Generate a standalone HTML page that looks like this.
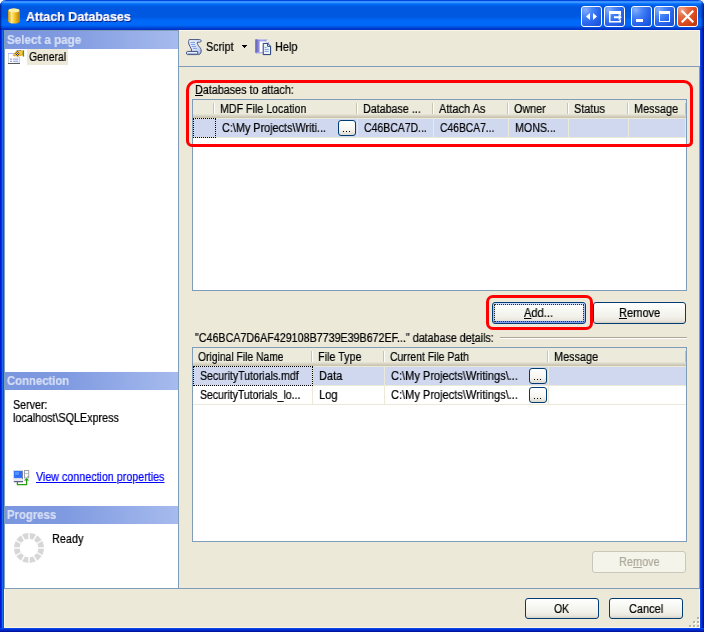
<!DOCTYPE html>
<html><head><meta charset="utf-8">
<style>
*{box-sizing:border-box;margin:0;padding:0}
html,body{width:704px;height:632px;overflow:hidden;background:#fff}
body{position:relative;font-family:"Liberation Sans",sans-serif;font-size:12.5px;color:#000}
.a{position:absolute}
.t{position:absolute;white-space:nowrap;line-height:16px;transform-origin:0 0;will-change:transform;-webkit-text-stroke:0.22px currentColor}
u{text-decoration:underline}
#frame{position:absolute;left:0;top:0;width:704px;height:632px;border-radius:6px 6px 0 0;overflow:hidden;
 background:linear-gradient(to right,#0019cf 0,#0019cf 1px,#0831d9 1px,#0831d9 2px,#166aee 2px,#166aee 3px,#0855dd 3px,#0855dd 4px,#ece9d8 4px,#ece9d8 700px,#0a46e6 700px,#0a46e6 701px,#0032d7 701px,#0032d7 702px,#001ebe 702px,#001ebe 703px,#001496 703px)}
#bot{position:absolute;left:0;top:628px;width:704px;height:4px;background:linear-gradient(to bottom,#0a46e6 0,#0a46e6 1px,#0032d7 1px,#0032d7 2px,#0023c3 2px,#0023c3 3px,#0014a0 3px)}
#title{position:absolute;left:0;top:0;width:704px;height:30px;
background:linear-gradient(to bottom,#0046e1 0.5px,#3a8fff 1.5px,#3c96ff 2.5px,#0c78ff 3.5px,#0069f5 4.5px,#005fe8 5.5px,#005ae1 6.5px,#0058e0 7.5px,#0058e0 8.5px,#0058e0 9.5px,#0058e0 10.5px,#0058e0 11.5px,#0058e0 12.5px,#0058e0 13.5px,#0058e0 14.5px,#0058e0 15.5px,#0058e0 16.5px,#005ce6 17.5px,#0060ec 18.5px,#0064f3 19.5px,#0069fa 20.5px,#0069fa 21.5px,#0069fa 22.5px,#0069fa 23.5px,#0069fa 24.5px,#0064f5 25.5px,#005ae8 26.5px,#004bda 27.5px,#003cd0 28.5px,#0032c8 29.5px)}
.tb{position:absolute;top:6px;width:21px;height:21px;border:1px solid #fff;border-radius:3px;
background:radial-gradient(ellipse at 20% 15%,#88aefa 0%,#4986f6 28%,#2b68ee 58%,#1c56de 85%,#164cd0 100%)}
.tb.close{background:radial-gradient(ellipse at 20% 15%,#f2a88c 0%,#e66c46 28%,#dc4e22 58%,#c63c10 85%,#b8340a 100%)}
/* left panel */
#left{position:absolute;left:4px;top:30px;width:175px;height:559px;background:#fff;border:1px solid #7f9db9}
.hdr{position:absolute;left:5px;width:173px;height:18px;background:linear-gradient(to right,#7a96df 0%,#7f9ae0 35%,#a6bbee 100%)}
/* grids */
.grid{position:absolute;background:#fff;border:1px solid #7f9db9;overflow:hidden}
.gh{position:absolute;left:0;top:0;right:0;height:18px;background:linear-gradient(to bottom,#ebeadb 0,#ebeadb 14px,#e5e2d3 14px,#e5e2d3 15px,#dbd8c7 15px,#dbd8c7 16px,#d1cdbc 16px,#d1cdbc 17px,#c9c5b3 17px)}
.sep{position:absolute;top:3px;width:2px;height:11px;border-left:1px solid #c7c5b2;border-right:1px solid #fff}
.row{position:absolute;left:0;right:0}
.sel{background:#d0d8f0}
.cl{position:absolute;top:0;width:1px;bottom:0;background:#ece9d8}
.foc{position:absolute;border:1px dotted #000}
.btn{position:absolute;border:1px solid #003c74;border-radius:3px;background:linear-gradient(to bottom,#fff 0%,#f9f9f5 30%,#f2f1ea 68%,#e8e6dc 88%,#d6d0c5 100%)}
.btn.def{box-shadow:inset 0 2px 0 0 #cedcfc, inset 0 -2px 0 0 #7f9fe8, inset 2px 0 0 0 #a9c2f3, inset -2px 0 0 0 #a9c2f3}
.btn.dis{border-color:#c9c7ba;background:#f5f4ea}
.ell{position:absolute;width:18px;border:1px solid #003c74;border-radius:3px;background:linear-gradient(to bottom,#fff 0%,#f6f5f0 60%,#dedbd0 100%)}
.ell i{position:absolute;bottom:3px;width:1px;height:1px;background:#000}
.red{position:absolute;border:3px solid #fe0000;border-radius:10px}
</style></head><body>
<div class="a" style="left:694px;top:0;width:10px;height:10px;background:#f4efd8"></div>
<div id="frame"></div>
<div class="a" style="left:0;top:0;width:704px;height:30px;overflow:hidden"><div id="title" style="border-radius:6px 6px 0 0"></div><div class="a" style="left:0;top:0;width:704px;height:30px;border-radius:6px 6px 0 0;background:linear-gradient(to right,rgba(0,0,110,.55) 0,rgba(0,0,110,.55) 1px,rgba(0,0,110,.22) 1px,rgba(0,0,110,.22) 2px,rgba(0,0,110,0) 2px,rgba(0,0,110,0) 701px,rgba(0,0,110,.2) 701px,rgba(0,0,110,.2) 702px,rgba(0,0,110,.42) 702px,rgba(0,0,110,.42) 703px,rgba(0,0,110,.62) 703px)"></div></div>
<div id="bot"></div>

<!-- title icon -->
<svg class="a" style="left:7px;top:7px" width="14" height="18" viewBox="0 0 14 18">
 <defs><linearGradient id="cy" x1="0" x2="1"><stop offset="0" stop-color="#c89412"/><stop offset=".3" stop-color="#ffe98a"/><stop offset=".55" stop-color="#f6c62a"/><stop offset="1" stop-color="#b47a08"/></linearGradient></defs>
 <path d="M1 4 C1 0.6 13 0.6 13 4 L13 14 C13 17.4 1 17.4 1 14 Z" fill="url(#cy)"/>
 <ellipse cx="7" cy="3.4" rx="5.4" ry="1.9" fill="#fdf0a8"/>
</svg>

<!-- caption buttons -->
<div class="tb" style="left:581px"></div>
<div class="tb" style="left:604px"></div>
<div class="tb" style="left:631px"></div>
<div class="tb" style="left:654px"></div>
<div class="tb close" style="left:677px"></div>
<svg class="a" style="left:581px;top:6px" width="117" height="21" viewBox="0 0 117 21" fill="#fff">
 <path d="M9 7 L9 14 L5 10.5 Z"/><path d="M12 7 L12 14 L16 10.5 Z"/>
 <path d="M28 5h12v4.6h-1.5v-1.6h-9v7h9v-1.4h1.5v2.9h-12z"/>
 <path d="M33 10.2h4.6v-2.2l3.2 3.2-3.2 3.2v-2.2h-4.6z"/>
 <rect x="55" y="13" width="7" height="3"/>
 <path d="M78 5h11v11h-11z M79 8v7h9v-7z" fill-rule="evenodd"/>
 <path d="M101.5 5.5 L111.5 15.5 M111.5 5.5 L101.5 15.5" stroke="#fff" stroke-width="2.2" stroke-linecap="square" fill="none"/>
</svg>

<!-- left panel -->
<div id="left"></div>
<div class="hdr" style="top:31px"></div>
<div class="a" style="left:27px;top:49px;width:41px;height:16px;background:#ece9d8"></div>
<div class="hdr" style="top:372px"></div>
<div class="hdr" style="top:506px"></div>
<!-- General icon: 8..24 x 50..64 -->
<svg class="a" style="left:8px;top:50px" width="17" height="14" viewBox="0 0 17 14">
 <defs><pattern id="chk" width="2" height="2" patternUnits="userSpaceOnUse"><rect width="2" height="2" fill="#f0d020"/><rect width="1" height="1" fill="#383868"/><rect x="1" y="1" width="1" height="1" fill="#383868"/></pattern>
 <linearGradient id="pg" x1="0" y1="0" x2="1" y2="1"><stop offset=".5" stop-color="#fff"/><stop offset="1" stop-color="#cfe4ff"/></linearGradient></defs>
 <rect x="0" y="3" width="12" height="11" fill="url(#pg)"/>
 <rect x="0" y="3" width="12" height="1" fill="#b4b4ff"/>
 <rect x="0" y="4" width="1" height="9" fill="#d4d4dc"/>
 <rect x="11" y="7" width="1" height="6" fill="#c4d0ff"/>
 <rect x="0" y="13" width="12" height="1" fill="#585858"/>
 <rect x="2" y="8.6" width="2" height="1" fill="#8484c8"/><rect x="5" y="8.6" width="5" height="1" fill="#9c9cd8"/>
 <rect x="2" y="10.8" width="2" height="1" fill="#8484c8"/><rect x="5" y="10.8" width="5" height="1" fill="#9c9cd8"/>
 <path d="M4.6 5.6 L8 1 L11.6 0.3 L15 0.6 L15 5.6 L12.4 6 L11 6 L9.6 7.6 L8.4 6 L6.4 6.4 Z" fill="#f2ae2e"/>
 <path d="M5 5.4 L8.2 1.2 L9.6 1.4 L6.6 5.8 Z" fill="#d8b45c"/>
 <path d="M10.4 1.2 L13.6 0.9 L14.6 2.6 L13 4.6 L10.8 4.2 Z" fill="#fcc83c"/>
 <path d="M9.6 0.9 L7 4 L9.6 7.2 L11.8 4 Z" fill="url(#chk)"/>
 <path d="M8.4 0.7 L13.4 0.3" stroke="#8c8c8c" stroke-width=".9"/>
 <rect x="14.8" y="0.4" width="1.3" height="6.2" fill="#28a428"/>
</svg>
<!-- Script icon: 186..202 x 39..55 -->
<svg class="a" style="left:186px;top:39px" width="17" height="17" viewBox="0 0 17 17">
 <defs><linearGradient id="sc" x1="0" y1="0" x2="1" y2="1"><stop offset="0" stop-color="#f4f8ff"/><stop offset=".6" stop-color="#d4e0f8"/><stop offset="1" stop-color="#a8bcec"/></linearGradient></defs>
 <path d="M3.2 0.6 H13.6 C15.6 0.6 15.8 3.2 13.4 3.2 H11.4 C10.4 6 15.4 8.4 15.2 12 C15 15 13 16 11.6 15.6 L11.4 12.6 H5.6 C6.2 9 2 6.4 2.6 2.6 C2.7 1.6 3 1 3.2 0.6 Z" fill="url(#sc)" stroke="#465280" stroke-width="1" stroke-linejoin="round"/>
 <path d="M1.4 12.4 H11 C12.2 12.4 12.2 15.6 11 15.6 H1.4 C0.2 15.6 0.2 12.4 1.4 12.4 Z" fill="#e8eefc" stroke="#465280" stroke-width="1"/>
 <rect x="1.6" y="14" width="9" height="1" fill="#a8b8e0"/>
 <path d="M4.4 3.4 H9 M4.6 5.4 H9 M5.6 7.4 H10 M7 9.4 H11" stroke="#7c9ce4" stroke-width="1"/>
</svg>
<!-- Help icon: 255..271 x 39..55 -->
<svg class="a" style="left:255px;top:39px" width="17" height="17" viewBox="0 0 17 17">
 <defs><linearGradient id="hb" x1="0" x2="1"><stop offset="0" stop-color="#7474c8"/><stop offset=".5" stop-color="#a4a4f0"/><stop offset="1" stop-color="#8484dc"/></linearGradient></defs>
 <path d="M0.4 0.4 H12.6 V3 H13.6 V13 L1.6 14.6 L0.4 13.4 Z" fill="url(#hb)"/>
 <rect x="0.4" y="0.4" width="2" height="13.4" fill="#6c6cc0"/>
 <path d="M1 13.6 H8 V14.6 H2 Z" fill="#c8c8e8"/>
 <path d="M4.6 2.4 H11.6 V13 H4.6 Z" fill="#fff"/>
 <path d="M11.6 0.8 H12.8 V4 H11.6 Z" fill="#fff"/>
 <path d="M8.2 4.4 H12.8 L15.6 7.2 V15.6 H8.2 Z" fill="#eef3fc" stroke="#1c3c74" stroke-width="1" stroke-linejoin="round"/>
 <path d="M12.6 4.6 V7.4 H15.4" fill="none" stroke="#1c3c74" stroke-width=".9"/>
 <path d="M9.6 8.4 H11.6 M9.6 10.4 H13.8 M9.6 12.4 H13.8" stroke="#7c9cd0" stroke-width="1"/>
</svg>
<!-- Connection icon: 13..30 x 470..485 -->
<svg class="a" style="left:13px;top:470px" width="18" height="16" viewBox="0 0 18 16">
 <rect x="0.5" y="0.5" width="9" height="8" fill="#3878ff" stroke="#d8d8e0" stroke-width="1"/>
 <rect x="1.6" y="1.6" width="6.8" height="5.8" fill="#2e6cf8"/>
 <path d="M2 2 H6 V5 H2 Z" fill="#5c9cff" opacity=".8"/>
 <rect x="9" y="1" width="1" height="8" fill="#7880b0"/>
 <rect x="0.4" y="9" width="9.6" height="2.4" fill="#e8e8f0"/>
 <rect x="0.8" y="11.2" width="9.2" height="1" fill="#383878"/>
 <rect x="11.5" y="0.5" width="4.2" height="7.4" fill="#fff" stroke="#a0a0a8" stroke-width="1"/>
 <rect x="12" y="3" width="3.4" height="1" fill="#c0c0c8"/>
 <rect x="14.4" y="6" width="1" height="1" fill="#40c040"/>
 <path d="M4.4 12 V14.6 H13.6 V9" fill="none" stroke="#2c9c10" stroke-width="1.3"/>
 <path d="M11 10.6 L13.6 8 L16.2 10.6 Z" fill="#2c9c10"/>
</svg>
<!-- spinner: centre 29,548 -->
<svg class="a" style="left:13px;top:532px" width="32" height="32" viewBox="-16 -16 32 32">
 <circle cx="0" cy="0" r="12.15" fill="none" stroke="#d7d7d7" stroke-width="5.7"/>
 <g stroke="#fff" stroke-width="1.4"><line x1="-16.00" y1="-0.00" x2="16.00" y2="0.00"/><line x1="-13.86" y1="-8.00" x2="13.86" y2="8.00"/><line x1="-8.00" y1="-13.86" x2="8.00" y2="13.86"/><line x1="-0.00" y1="-16.00" x2="0.00" y2="16.00"/><line x1="8.00" y1="-13.86" x2="-8.00" y2="13.86"/><line x1="13.86" y1="-8.00" x2="-13.86" y2="8.00"/></g>
</svg>


<!-- toolbar line -->
<div class="a" style="left:179px;top:66px;width:521px;height:1px;background:#7f9db9"></div>
<div class="a" style="left:699px;top:66px;width:1px;height:523px;background:#7f9db9"></div>
<div class="a" style="left:179px;top:30px;width:521px;height:1px;background:#fbf6e4"></div>
<div class="a" style="left:699px;top:30px;width:1px;height:36px;background:#fbf6e4"></div>
<div class="a" style="left:4px;top:589px;width:696px;height:39px;border:1px solid #fbf6e4;border-top:none"></div>
<!-- dropdown arrow -->
<svg class="a" style="left:242px;top:45px" width="5" height="3" viewBox="0 0 5 3" shape-rendering="crispEdges"><path d="M0 0h5v1h-1v1h-1v1h-1v-1h-1v-1h-1z" fill="#000"/></svg>

<!-- grid 1 -->
<div class="grid" style="left:192px;top:99px;width:495px;height:192px">
 <div class="gh"></div>
 <div class="sep" style="left:20px"></div><div class="sep" style="left:163px"></div><div class="sep" style="left:239px"></div><div class="sep" style="left:314px"></div><div class="sep" style="left:374px"></div><div class="sep" style="left:434px"></div><div class="sep" style="left:492px"></div>
 <div class="row" style="top:18px;height:20px;background:#ece9d8"></div>
 <div class="row sel" style="top:19px;height:18px">
  <div class="cl" style="left:164px"></div><div class="cl" style="left:240px"></div><div class="cl" style="left:315px"></div><div class="cl" style="left:375px"></div><div class="cl" style="left:435px"></div><div class="cl" style="left:492px"></div>
 </div>
 <div class="foc" style="left:0;top:18px;width:23px;height:20px"></div>
 <div class="ell" style="left:145px;top:20px;height:16px"><i style="left:4px"></i><i style="left:7px"></i><i style="left:10px"></i></div>
</div>
<div class="red" style="left:186px;top:80px;width:507px;height:67px;border-radius:10px 9px 5px 6px"></div>

<!-- add/remove -->
<div class="btn def" style="left:492px;top:302px;width:94px;height:22px"><div class="foc" style="left:1px;top:1px;right:1px;bottom:1px;border-color:#3c2c1c"></div></div>
<div class="btn" style="left:593px;top:302px;width:93px;height:22px"></div>
<div class="red" style="left:486px;top:295px;width:107px;height:35px;border-radius:7px"></div>

<!-- etched line -->
<div class="a" style="left:500px;top:337px;width:187px;height:2px;border-top:1px solid #aca899;border-bottom:1px solid #fff"></div>

<!-- grid 2 -->
<div class="grid" style="left:192px;top:347px;width:495px;height:195px">
 <div class="gh"></div>
 <div class="sep" style="left:118px"></div><div class="sep" style="left:190px"></div><div class="sep" style="left:354px"></div><div class="sep" style="left:492px"></div>
 <div class="row" style="top:18px;height:39px;background:#ece9d8"></div>
 <div class="row sel" style="top:19px;height:18px">
  <div class="cl" style="left:119px"></div><div class="cl" style="left:191px"></div><div class="cl" style="left:355px"></div>
 </div>
 <div class="row" style="top:38px;height:18px;background:#fff">
  <div class="cl" style="left:119px"></div><div class="cl" style="left:191px"></div><div class="cl" style="left:355px"></div>
 </div>
 <div class="foc" style="left:0;top:18px;width:120px;height:20px"></div>
 <div class="ell" style="left:336px;top:20px;height:16px"><i style="left:4px"></i><i style="left:7px"></i><i style="left:10px"></i></div>
 <div class="ell" style="left:336px;top:39px;height:16px"><i style="left:4px"></i><i style="left:7px"></i><i style="left:10px"></i></div>
</div>

<div class="btn dis" style="left:592px;top:551px;width:94px;height:22px"></div>
<div class="a" style="left:4px;top:588px;width:696px;height:1px;background:#7f9db9"></div>
<div class="btn" style="left:525px;top:598px;width:74px;height:21px"></div>
<div class="btn" style="left:609px;top:598px;width:74px;height:21px"></div>
<!-- grip -->
<svg class="a" style="left:689px;top:617px" width="11" height="11" viewBox="0 0 11 11" shape-rendering="crispEdges">
 <g fill="#fff"><rect x="9" y="1" width="2" height="2"/><rect x="5" y="5" width="2" height="2"/><rect x="9" y="5" width="2" height="2"/><rect x="1" y="9" width="2" height="2"/><rect x="5" y="9" width="2" height="2"/><rect x="9" y="9" width="2" height="2"/></g>
 <g fill="#b8b4a2"><rect x="8" y="0" width="2" height="2"/><rect x="4" y="4" width="2" height="2"/><rect x="8" y="4" width="2" height="2"/><rect x="0" y="8" width="2" height="2"/><rect x="4" y="8" width="2" height="2"/><rect x="8" y="8" width="2" height="2"/></g>
</svg>

<div class="t" style="left:25.70px;top:9.09px;transform:scaleX(0.9177);font-size:13.6px;font-weight:bold;color:#fff;text-shadow:1px 1px 0 #0a1883;">Attach Databases</div>
<div class="t" style="left:7.20px;top:31.67px;transform:scaleX(0.9286);font-size:12.5px;font-weight:bold;color:#d6dff5;">Select a page</div>
<div class="t" style="left:29.00px;top:48.67px;transform:scaleX(0.8340);font-size:12.5px;">General</div>
<div class="t" style="left:7.20px;top:372.67px;transform:scaleX(0.9047);font-size:12.5px;font-weight:bold;color:#d6dff5;">Connection</div>
<div class="t" style="left:13.00px;top:396.67px;transform:scaleX(0.8537);font-size:12.5px;">Server:</div>
<div class="t" style="left:13.00px;top:409.67px;transform:scaleX(0.8603);font-size:12.5px;">localhost\SQLExpress</div>
<div class="t" style="left:36.00px;top:468.67px;transform:scaleX(0.8567);font-size:12.5px;color:#0000ff;text-decoration:underline;">View connection properties</div>
<div class="t" style="left:7.20px;top:506.67px;transform:scaleX(0.9077);font-size:12.5px;font-weight:bold;color:#d6dff5;">Progress</div>
<div class="t" style="left:52.30px;top:530.67px;transform:scaleX(0.8688);font-size:12.5px;">Ready</div>
<div class="t" style="left:206.20px;top:38.67px;transform:scaleX(0.8638);font-size:12.5px;">Script</div>
<div class="t" style="left:275.00px;top:38.67px;transform:scaleX(0.8710);font-size:12.5px;">Help</div>
<div class="t" style="left:195.00px;top:81.67px;transform:scaleX(0.8616);font-size:12.5px;"><u>D</u>atabases to attach:</div>
<div class="t" style="left:220.20px;top:100.67px;transform:scaleX(0.8518);font-size:12.5px;">MDF File Location</div>
<div class="t" style="left:363.00px;top:100.67px;transform:scaleX(0.8560);font-size:12.5px;">Database ...</div>
<div class="t" style="left:438.80px;top:100.67px;transform:scaleX(0.8786);font-size:12.5px;">Attach As</div>
<div class="t" style="left:514.20px;top:100.67px;transform:scaleX(0.8608);font-size:12.5px;">Owner</div>
<div class="t" style="left:573.80px;top:100.67px;transform:scaleX(0.8720);font-size:12.5px;">Status</div>
<div class="t" style="left:633.80px;top:100.67px;transform:scaleX(0.8712);font-size:12.5px;">Message</div>
<div class="t" style="left:221.80px;top:119.67px;transform:scaleX(0.8672);font-size:12.5px;">C:\My Projects\Writi...</div>
<div class="t" style="left:364.10px;top:119.67px;transform:scaleX(0.8383);font-size:12.5px;">C46BCA7D...</div>
<div class="t" style="left:440.20px;top:119.67px;transform:scaleX(0.8240);font-size:12.5px;">C46BCA7...</div>
<div class="t" style="left:515.00px;top:119.67px;transform:scaleX(0.8514);font-size:12.5px;">MONS...</div>
<div class="t" style="left:524.20px;top:304.67px;transform:scaleX(0.8876);font-size:12.5px;"><u>A</u>dd...</div>
<div class="t" style="left:618.70px;top:304.67px;transform:scaleX(0.8870);font-size:12.5px;"><u>R</u>emove</div>
<div class="t" style="left:195.10px;top:329.67px;transform:scaleX(0.8566);font-size:12.5px;">"C46BCA7D6AF429108B7739E39B672EF..." database de<u>t</u>ails:</div>
<div class="t" style="left:198.10px;top:348.67px;transform:scaleX(0.8260);font-size:12.5px;">Original File Name</div>
<div class="t" style="left:318.40px;top:348.67px;transform:scaleX(0.8634);font-size:12.5px;">File Type</div>
<div class="t" style="left:389.90px;top:348.67px;transform:scaleX(0.8351);font-size:12.5px;">Current File Path</div>
<div class="t" style="left:554.10px;top:348.67px;transform:scaleX(0.8712);font-size:12.5px;">Message</div>
<div class="t" style="left:200.20px;top:367.67px;transform:scaleX(0.8440);font-size:12.5px;">SecurityTutorials.mdf</div>
<div class="t" style="left:319.20px;top:367.67px;transform:scaleX(0.8786);font-size:12.5px;">Data</div>
<div class="t" style="left:391.30px;top:367.67px;transform:scaleX(0.8840);font-size:12.5px;">C:\My Projects\Writings\...</div>
<div class="t" style="left:200.20px;top:386.67px;transform:scaleX(0.8385);font-size:12.5px;">SecurityTutorials_lo...</div>
<div class="t" style="left:319.20px;top:386.67px;transform:scaleX(0.8821);font-size:12.5px;">Log</div>
<div class="t" style="left:391.30px;top:386.67px;transform:scaleX(0.8840);font-size:12.5px;">C:\My Projects\Writings\...</div>
<div class="t" style="left:619.10px;top:553.67px;transform:scaleX(0.8741);font-size:12.5px;color:#aca899;">Re<u>m</u>ove</div>
<div class="t" style="left:554.00px;top:600.67px;transform:scaleX(0.8360);font-size:12.5px;">OK</div>
<div class="t" style="left:628.70px;top:600.67px;transform:scaleX(0.8761);font-size:12.5px;">Cancel</div>
</body></html>
